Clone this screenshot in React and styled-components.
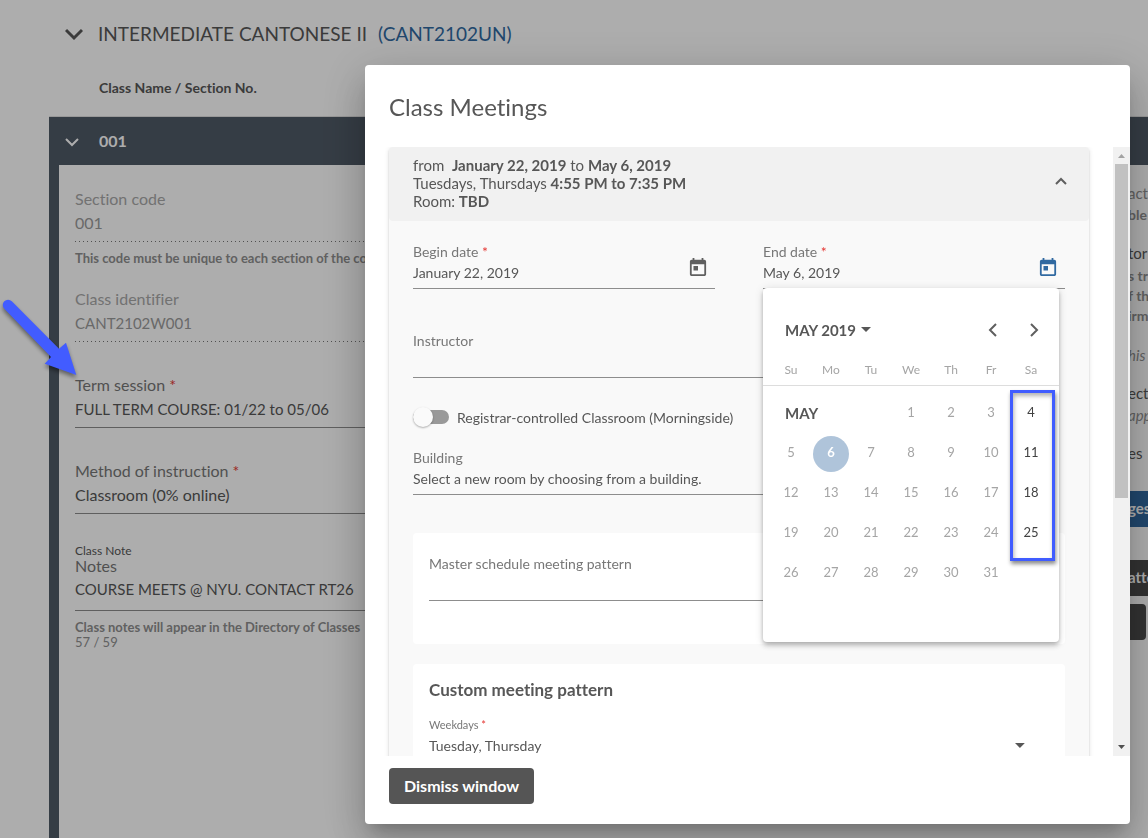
import React from 'react';
import styled, { createGlobalStyle, css } from 'styled-components';

const GlobalStyle = createGlobalStyle`
  *, *::before, *::after { box-sizing: border-box; }
  html, body, #root { height: 100%; }
  body {
    margin: 0;
    overflow: hidden;
    background: #fff;
    color: #575757;
    font-family: Lato, "Liberation Sans", sans-serif;
    font-variant-ligatures: none;
  }
  button, input, select { font: inherit; color: inherit; font-variant-ligatures: none; }
`;

/* ---------- page behind the dialog ---------- */

const Page = styled.main`
  height: 100%;
  padding-left: 49px;
  overflow: hidden;
`;

const CourseHeading = styled.h1`
  display: flex;
  align-items: center;
  margin: 0;
  padding: 22px 0 0 16px;
  font-size: 19px;
  font-weight: 400;
  line-height: 24px;
  white-space: nowrap;
`;

const CourseLink = styled.a`
  margin-left: 11px;
  color: #3069a1;
  text-decoration: none;
`;

const IconSlot = styled.span`
  display: flex;
  flex: none;
  width: ${(p) => p.$width}px;
`;

const ColumnHeading = styled.h2`
  margin: 32px 0 18px;
  padding-left: 50px;
  font-size: 14px;
  line-height: 20px;
`;

const Section = styled.section`
  height: 100%;
  border-top: 1px solid #e0e0e0;
`;

const SectionBar = styled.header`
  display: flex;
  align-items: center;
  height: 48px;
  padding: 0 0 2px 16px;
  background: #4f5a66;
  color: #fff;
  font-size: 16px;
  font-weight: 700;
`;

const SectionBody = styled.div`
  display: flex;
  height: 100%;
  border-left: 10px solid #4f5a66;
  padding-left: 16px;
`;

const FormColumn = styled.div`
  flex: 1;
  min-width: 0;
  padding-top: 22px;
`;

const SideColumn = styled.aside`
  display: flex;
  flex-direction: column;
  flex: none;
  width: 20px;
  padding-top: 18px;
  white-space: nowrap;
`;

const PageField = styled.div`
  display: flex;
  flex-direction: column;
  margin-bottom: ${(p) => p.$after}px;
  color: ${(p) => (p.$disabled ? '#9b9b9b' : '#575757')};
  font-size: 16px;
`;

const PageLabel = styled.label`
  line-height: ${(p) => (p.$tight ? 16 : 24)}px;
  color: ${(p) => (p.$disabled ? '#a8a8a8' : '#777')};
`;

const PageInput = styled.input`
  width: 100%;
  height: ${(p) => (p.$roomy ? 37 : 31)}px;
  padding: 0 0 7px;
  border: 0;
  border-bottom: 1px solid #8d8d8d;
  border-radius: 0;
  background: none;
  outline: 0;
  font-size: ${(p) => (p.$caps ? 15 : 16)}px;

  &:disabled {
    border-bottom-color: transparent;
    background: linear-gradient(to right, #777 1px, transparent 1px) 0 100% / 4px 1px repeat-x border-box;
  }
`;

const FieldTitle = styled.span`
  font-size: 12px;
  line-height: 14px;
`;

const Hint = styled.strong`
  margin-top: 8px;
  font-size: 13px;
  line-height: 16px;
  color: #8f8f8f;
  white-space: nowrap;
`;

const Counter = styled.span`
  font-size: 13px;
  line-height: 14px;
  color: #8f8f8f;
`;

const Required = styled.span`
  color: #e53935;
`;

const SideText = styled.p`
  margin: ${(p) => p.$before || 0}px 0 0;
  font-size: ${(p) => (p.$small ? 14 : 15)}px;
  font-weight: ${(p) => (p.$bold ? 700 : 400)};
  font-style: ${(p) => (p.$italic ? 'italic' : 'normal')};
  line-height: 20px;
  color: ${(p) => (p.$muted ? '#909090' : '#575757')};
`;

const SideButton = styled.button`
  flex: none;
  width: ${(p) => (p.$short ? 18 : 40)}px;
  height: 36px;
  margin: ${(p) => p.$before}px 0 0;
  padding: 0 0 2px;
  border: 0;
  border-radius: 0 ${(p) => (p.$short ? 4 : 0)}px ${(p) => (p.$short ? 4 : 0)}px 0;
  background: ${(p) => (p.$primary ? '#3069a1' : '#4a4a4a')};
  color: #fff;
  font-size: 15px;
  font-weight: 700;
  text-align: left;
`;

/* ---------- dialog ---------- */

const Backdrop = styled.div`
  position: fixed;
  inset: 0;
  display: flex;
  padding: 65px 18px 14px 365px;
  background: rgba(0, 0, 0, 0.32);
`;

const Dialog = styled.section`
  display: flex;
  flex: 1;
  flex-direction: column;
  min-width: 0;
  border-radius: 4px;
  background: #fff;
  color: #575757;
  box-shadow: 0 11px 15px -7px rgba(0, 0, 0, 0.2), 0 24px 38px 3px rgba(0, 0, 0, 0.14),
    0 9px 46px 8px rgba(0, 0, 0, 0.12);
`;

const DialogTitle = styled.h2`
  margin: 24px 24px 22px;
  font-size: 24px;
  font-weight: 400;
  line-height: 36px;
`;

const DialogContent = styled.div`
  display: flex;
  flex: 1;
  min-height: 0;
  overflow: hidden;
`;

const Scrolled = styled.div`
  flex: 1;
  min-width: 0;
  padding: 0 24px;
`;

const ScrollTrack = styled.div`
  display: flex;
  flex: none;
  flex-direction: column;
  justify-content: space-between;
  align-items: center;
  width: 17px;
  background: #f1f1f1;
`;

const ScrollArrow = styled.svg`
  flex: none;
  width: 17px;
  height: 17px;
`;

const ScrollSpace = styled.div`
  flex: 1;
  width: 13px;
`;

const ScrollThumb = styled.div`
  height: 58%;
  background: #c1c1c1;
`;

const DialogActions = styled.footer`
  display: flex;
  padding: 12px 24px 20px;
`;

const DismissButton = styled.button`
  height: 36px;
  padding: 0 15px 2px;
  border: 0;
  border-radius: 4px;
  background: #555;
  color: #fff;
  font-size: 16px;
  font-weight: 700;
`;

const Panel = styled.article`
  border-radius: 4px;
  background: #f9f9f9;
  box-shadow: 0 3px 1px -2px rgba(0, 0, 0, 0.2), 0 2px 2px 0 rgba(0, 0, 0, 0.14),
    0 1px 5px 0 rgba(0, 0, 0, 0.12);
`;

const PanelHeader = styled.header`
  display: flex;
  align-items: center;
  justify-content: space-between;
  padding: 9px 16px 11px 24px;
  border-radius: 4px;
  background: #f1f1f1;
`;

const Summary = styled.p`
  margin: 0;
  font-size: 15px;
  line-height: 18px;
`;

const IconButton = styled.button`
  display: flex;
  align-items: center;
  justify-content: center;
  flex: none;
  width: ${(p) => p.$size || 24}px;
  height: ${(p) => p.$size || 24}px;
  padding: 0;
  border: 0;
  background: none;
  color: ${(p) => (p.$active ? '#3069a1' : '#5f5f5f')};
`;

const PanelBody = styled.div`
  padding: 21px 24px 0;
`;

const DateRow = styled.div`
  display: grid;
  grid-template-columns: 1fr 1fr;
  gap: 48px;
  margin-bottom: 42px;
`;

const Field = styled.div`
  display: flex;
  flex-direction: column;
  width: ${(p) => (p.$narrow ? '90%' : '100%')};
  border-bottom: ${(p) => (p.$open ? 0 : 1)}px solid #8d8d8d;
  margin-bottom: ${(p) => p.$after || 0}px;
  padding-bottom: 5px;
  font-size: 14px;
`;

const DateField = styled.div`
  position: relative;
  display: flex;
  align-items: flex-end;
  padding: 0 1px 5px 0;
  border-bottom: 1px solid #8d8d8d;
  font-size: 14px;
`;

const DateText = styled.div`
  display: flex;
  flex: 1;
  flex-direction: column;
  min-width: 0;
`;

const Label = styled.label`
  color: #777;
  font-size: ${(p) => (p.$small ? 11 : 14)}px;
  line-height: ${(p) => (p.$small ? 14 : 20)}px;
`;

const controlStyle = css`
  width: 100%;
  height: 21px;
  padding: 0;
  border: 0;
  background: none;
  outline: 0;
`;

const Input = styled.input`${controlStyle}`;

const Select = styled.select`
  ${controlStyle}
  appearance: none;
`;

const ToggleRow = styled.label`
  display: flex;
  align-items: center;
  gap: 8px;
  height: 20px;
  margin: 29px 0 21px;
  font-size: 14px;
`;

const Toggle = styled.input`
  appearance: none;
  display: flex;
  align-items: center;
  flex: none;
  width: 36px;
  height: 14px;
  margin: 0;
  border-radius: 7px;
  background: #999;

  &::before {
    content: '';
    width: 20px;
    height: 20px;
    border-radius: 50%;
    background: #fafafa;
    box-shadow: 0 1px 2px rgba(0, 0, 0, 0.3);
  }
`;

const Card = styled.section`
  margin-bottom: 20px;
  padding: ${(p) => (p.$heading ? '16px 16px 24px' : '21px 16px 43px')};
  border-radius: 4px;
  background: #fff;
`;

const CardTitle = styled.h3`
  margin: 0 0 18px;
  font-size: 17px;
  line-height: 20px;
`;

const SelectLine = styled.div`
  display: flex;
  align-items: center;
  padding: 3px 24px 0 0;
`;

/* ---------- date picker ---------- */

const Calendar = styled.div`
  position: absolute;
  top: 46px;
  left: 0;
  z-index: 1;
  width: 296px;
  height: 354px;
  border-radius: 4px;
  background: #fff;
  box-shadow: 0 2px 4px -1px rgba(0, 0, 0, 0.2), 0 4px 5px 0 rgba(0, 0, 0, 0.14),
    0 1px 10px 0 rgba(0, 0, 0, 0.12);
`;

const CalendarHeader = styled.div`
  display: flex;
  align-items: center;
  padding: 21px 5px 0 22px;
`;

const PeriodButton = styled.button`
  display: flex;
  align-items: center;
  gap: 5px;
  margin-right: auto;
  padding: 0;
  border: 0;
  background: none;
  font-size: 15px;
  font-weight: 700;
`;

const Month = styled.table`
  width: 100%;
  border-collapse: separate;
  border-spacing: 0;
  table-layout: fixed;
`;

const Weekday = styled.th`
  height: 36px;
  padding: 3px 0 0;
  border-bottom: 1px solid #ddd;
  color: #a5a5a5;
  font-size: 12px;
  font-weight: 400;
`;

const EdgeCell = styled.td`
  width: 8px;
  padding: 0;
  border-bottom: 1px solid #ddd;
`;

const Weeks = styled.tbody`
  &::before {
    content: '';
    display: table-row;
    height: 8px;
  }
`;

const DayCell = styled.td`
  height: 40px;
  padding: 0;
  text-align: center;
`;

const MonthName = styled.th`
  padding: 0 0 2px 14px;
  font-size: 15px;
  text-align: left;
`;

const Day = styled.button`
  width: 36px;
  height: 36px;
  padding: 0 0 4px;
  border: 0;
  border-radius: 50%;
  background: ${(p) => (p.$selected ? '#afc4da' : 'none')};
  color: ${(p) => (p.$selected ? '#fff' : p.disabled ? '#a5a5a5' : '#424242')};
  font-size: 13px;
  font-weight: ${(p) => (p.$selected ? 700 : 400)};
`;

/* ---------- annotations ---------- */

const Highlight = styled.div`
  position: absolute;
  top: 102px;
  left: 247px;
  width: 45px;
  height: 171px;
  border: 3px solid #405cff;
  box-shadow: 1px 3px 4px rgba(0, 0, 0, 0.45), inset 1px 3px 4px rgba(0, 0, 0, 0.3);
  pointer-events: none;
`;

const Pointer = styled.svg`
  position: fixed;
  top: 294px;
  left: 0;
  width: 84px;
  height: 90px;
  filter: drop-shadow(0 3px 2px rgba(0, 0, 0, 0.45));
  pointer-events: none;
`;

const Chevron = ({ size, stroke, d }) => (
  <svg width={size} height={size} viewBox={`0 0 ${size} ${size}`} fill="none" stroke="currentColor" strokeWidth={stroke} aria-hidden="true">
    <path d={d} />
  </svg>
);

const Caret = () => (
  <svg width="10" height="5" viewBox="0 0 10 5" fill="currentColor" aria-hidden="true">
    <path d="M0 0h10L5 5z" />
  </svg>
);

const CalendarIcon = () => (
  <svg width="24" height="24" viewBox="0 0 24 24" fill="currentColor" aria-hidden="true">
    <path d="M19 3h-1V1h-2v2H8V1H6v2H5c-1.11 0-1.99.9-1.99 2L3 19c0 1.1.89 2 2 2h14c1.1 0 2-.9 2-2V5c0-1.1-.9-2-2-2zm0 16H5V8h14v11zM7 10h5v5H7z" transform="translate(1.2 2.100) scale(.9)" />
  </svg>
);

const WEEKDAYS = ['Su', 'Mo', 'Tu', 'We', 'Th', 'Fr', 'Sa'];
const WEEKS = [
  [1, 2, 3, 4],
  [5, 6, 7, 8, 9, 10, 11],
  [12, 13, 14, 15, 16, 17, 18],
  [19, 20, 21, 22, 23, 24, 25],
  [26, 27, 28, 29, 30, 31],
];

function DatePicker() {
  return (
    <Calendar role="dialog" aria-label="Choose end date">
      <CalendarHeader>
        <PeriodButton type="button">MAY 2019 <Caret /></PeriodButton>
        <IconButton $size={41} type="button" aria-label="Previous month">
          <Chevron size={24} stroke={2} d="M15 6l-6 6 6 6" />
        </IconButton>
        <IconButton $size={41} type="button" aria-label="Next month">
          <Chevron size={24} stroke={2} d="M9 6l6 6-6 6" />
        </IconButton>
      </CalendarHeader>
      <Month>
        <thead>
          <tr>
            <EdgeCell />
            {WEEKDAYS.map((d) => <Weekday key={d} scope="col">{d}</Weekday>)}
            <EdgeCell />
          </tr>
        </thead>
        <Weeks>
          {WEEKS.map((week, i) => (
            <tr key={week[0]}>
              <td />
              {i === 0 && <MonthName colSpan={3}>MAY</MonthName>}
              {week.map((n) => (
                <DayCell key={n}>
                  <Day type="button" $selected={n === 6} disabled={n !== 6 && n % 7 !== 4}>{n}</Day>
                </DayCell>
              ))}
            </tr>
          ))}
        </Weeks>
      </Month>
      <Highlight />
    </Calendar>
  );
}

function DateInput({ id, label, value, open }) {
  return (
    <DateField>
      <DateText>
        <Label htmlFor={id}>{label} <Required>*</Required></Label>
        <Input id={id} defaultValue={value} />
      </DateText>
      <IconButton type="button" $size={32} $active={open} aria-label={`Open ${label} calendar`}><CalendarIcon /></IconButton>
      {open && <DatePicker />}
    </DateField>
  );
}

export default function App() {
  return (
    <>
      <GlobalStyle />
      <Page>
        <CourseHeading>
          <IconSlot $width={33}><Chevron size={18} stroke={3} d="M1 5l8 8 8-8" /></IconSlot>
          INTERMEDIATE CANTONESE II <CourseLink href="#course">(CANT2102UN)</CourseLink>
        </CourseHeading>
        <ColumnHeading>Class Name / Section No.</ColumnHeading>
        <Section>
          <SectionBar>
            <IconSlot $width={34}><Chevron size={14} stroke={2} d="M1 6l6 6 6-6" /></IconSlot>
            001
          </SectionBar>
          <SectionBody>
            <FormColumn>
              <PageField $disabled $after={21}>
                <PageLabel $disabled htmlFor="code">Section code</PageLabel>
                <PageInput id="code" disabled defaultValue="001" />
                <Hint>This code must be unique to each section of the course</Hint>
              </PageField>
              <PageField $disabled $after={31}>
                <PageLabel $disabled htmlFor="ident">Class identifier</PageLabel>
                <PageInput id="ident" $caps disabled defaultValue="CANT2102W001" />
              </PageField>
              <PageField $after={31}>
                <PageLabel htmlFor="term">Term session <Required>*</Required></PageLabel>
                <PageInput id="term" $caps defaultValue="FULL TERM COURSE: 01/22 to 05/06" />
              </PageField>
              <PageField $after={30}>
                <PageLabel htmlFor="method">Method of instruction <Required>*</Required></PageLabel>
                <PageInput id="method" defaultValue="Classroom (0% online)" />
              </PageField>
              <PageField $after={0}>
                <FieldTitle>Class Note</FieldTitle>
                <PageLabel $tight htmlFor="notes">Notes</PageLabel>
                <PageInput id="notes" $roomy $caps defaultValue="COURSE MEETS @ NYU. CONTACT RT26" />
                <Hint>Class notes will appear in the Directory of Classes</Hint>
                <Counter>57 / 59</Counter>
              </PageField>
            </FormColumn>
            <SideColumn>
              <SideText $muted>acti</SideText>
              <SideText $muted $bold $small $before={2}>ble</SideText>
              <SideText $before={18}>tor</SideText>
              <SideText $muted $bold $small $before={3}>s tr</SideText>
              <SideText $muted $bold $small>f th</SideText>
              <SideText $muted $bold $small>irm</SideText>
              <SideText $muted $italic $before={19}>his</SideText>
              <SideText $before={18}>ect</SideText>
              <SideText $muted $italic $before={2}>app</SideText>
              <SideText $before={18}>es</SideText>
              <SideButton $primary $before={28} type="button">ges</SideButton>
              <SideButton $before={33} type="button">atte</SideButton>
              <SideButton $short $before={8} type="button" aria-label="Close" />
            </SideColumn>
          </SectionBody>
        </Section>
      </Page>

      <Backdrop>
        <Dialog role="dialog" aria-labelledby="dialog-title">
          <DialogTitle id="dialog-title">Class Meetings</DialogTitle>
          <DialogContent>
            <Scrolled>
              <Panel>
                <PanelHeader>
                  <Summary>
                    from &nbsp;<b>January 22, 2019</b> to <b>May 6, 2019</b><br />
                    Tuesdays, Thursdays <b>4:55 PM to 7:35 PM</b><br />
                    Room: <b>TBD</b>
                  </Summary>
                  <IconButton type="button" aria-label="Collapse meeting">
                    <Chevron size={12} stroke={2} d="M1 7l5-5 5 5" />
                  </IconButton>
                </PanelHeader>
                <PanelBody>
                  <DateRow>
                    <DateInput id="begin" label="Begin date" value="January 22, 2019" />
                    <DateInput id="end" label="End date" value="May 6, 2019" open />
                  </DateRow>
                  <Field $narrow>
                    <Label htmlFor="instructor">Instructor</Label>
                    <Input id="instructor" />
                  </Field>
                  <ToggleRow>
                    <Toggle type="checkbox" role="switch" />
                    Registrar-controlled Classroom (Morningside)
                  </ToggleRow>
                  <Field $narrow $after={38}>
                    <Label htmlFor="building">Building</Label>
                    <Select id="building">
                      <option>Select a new room by choosing from a building.</option>
                    </Select>
                  </Field>
                  <Card>
                    <Field $narrow>
                      <Label htmlFor="pattern">Master schedule meeting pattern</Label>
                      <Input id="pattern" />
                    </Field>
                  </Card>
                  <Card $heading>
                    <CardTitle>Custom meeting pattern</CardTitle>
                    <Field $open>
                      <Label $small htmlFor="weekdays">Weekdays <Required>*</Required></Label>
                      <SelectLine>
                        <Select id="weekdays"><option>Tuesday, Thursday</option></Select>
                        <Caret />
                      </SelectLine>
                    </Field>
                  </Card>
                </PanelBody>
              </Panel>
            </Scrolled>
            <ScrollTrack aria-hidden="true">
              <ScrollArrow viewBox="0 0 17 17" fill="#a3a3a3"><path d="M5 11h7L8.500 7z" /></ScrollArrow>
              <ScrollSpace><ScrollThumb /></ScrollSpace>
              <ScrollArrow viewBox="0 0 17 17" fill="#505050"><path d="M5 6h7L8.500 10z" /></ScrollArrow>
            </ScrollTrack>
          </DialogContent>
          <DialogActions>
            <DismissButton type="button">Dismiss window</DismissButton>
          </DialogActions>
        </Dialog>
      </Backdrop>

      <Pointer viewBox="0 294 84 90" fill="#425cff" aria-hidden="true">
        <path d="M4.300 308.800A5.300 5.300 0 0 1 11.800 301.300L59 348.700 66 342.700 76.300 375 44.700 363.700 51 357z" />
      </Pointer>
    </>
  );
}
